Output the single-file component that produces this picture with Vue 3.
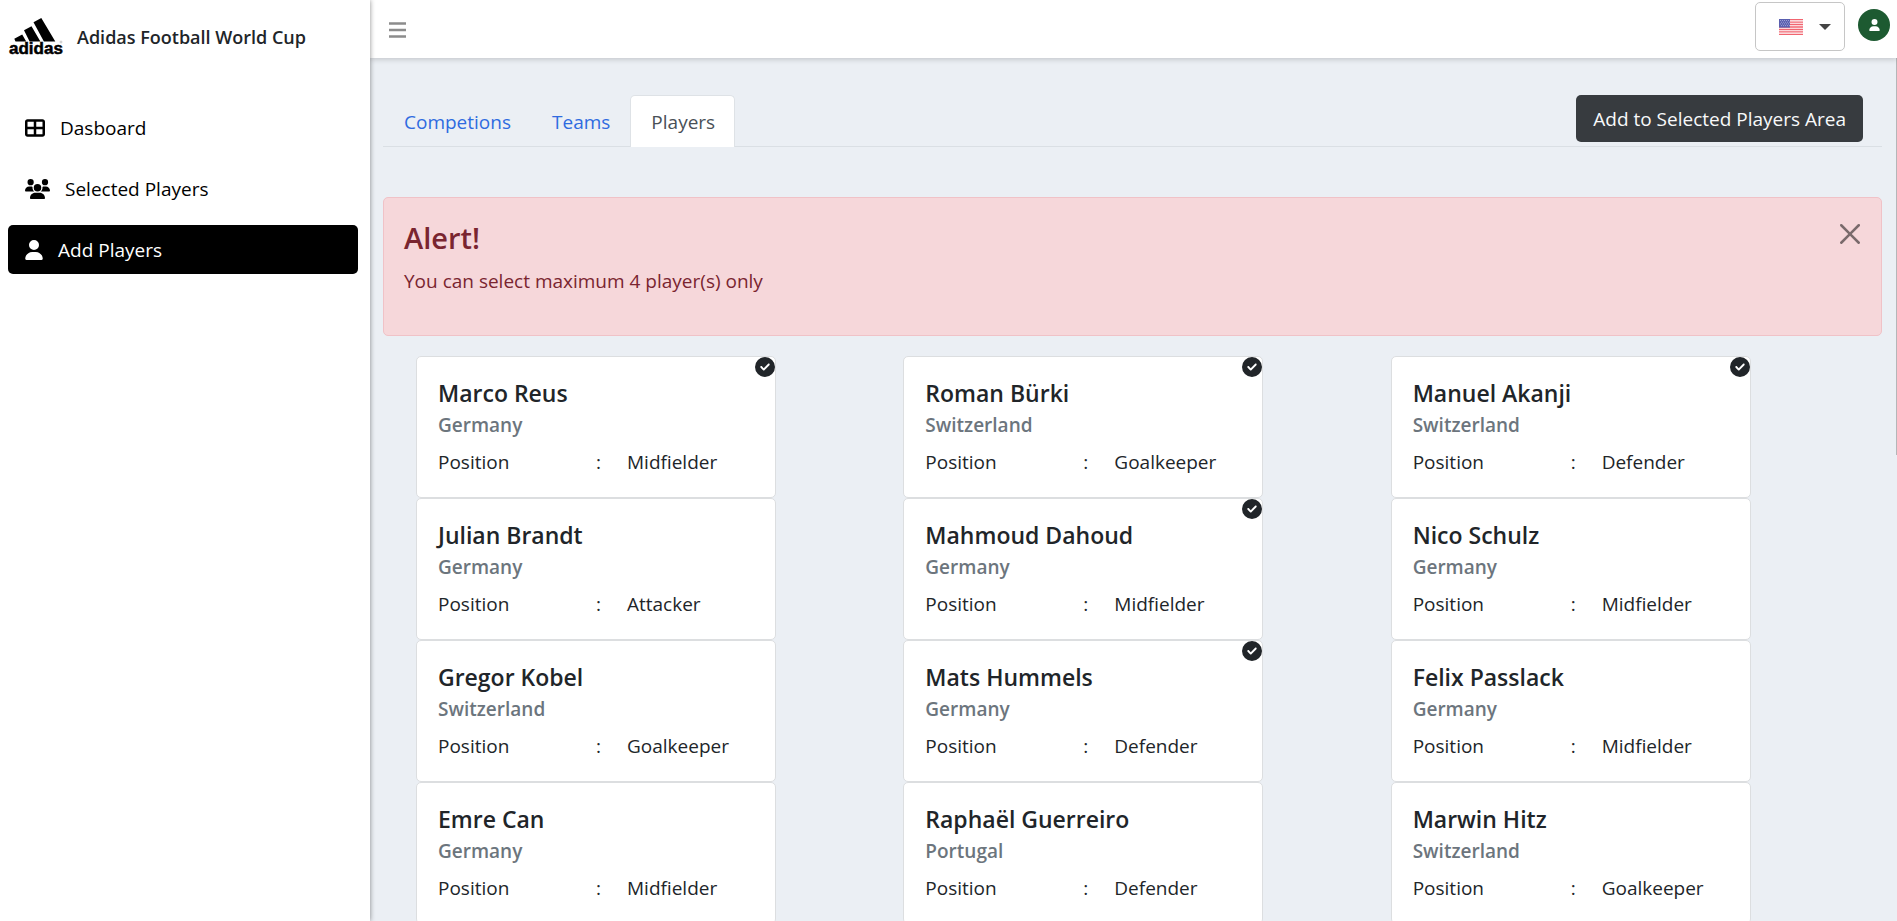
<script setup>
import { ref } from 'vue'

const navItems = [
  {
    label: 'Dasboard',
    box: '0 0 512 512',
    width: 20,
    path: 'M448 96V224H288V96H448zm0 192V416H288V288H448zM224 224H64V96H224V224zM64 288H224V416H64V288zM64 32C28.7 32 0 60.7 0 96V416c0 35.3 28.7 64 64 64H448c35.3 0 64-28.7 64-64V96c0-35.3-28.7-64-64-64H64z'
  },
  {
    label: 'Selected Players',
    box: '0 0 640 512',
    width: 25,
    path: 'M144 0a80 80 0 1 1 0 160A80 80 0 1 1 144 0zM512 0a80 80 0 1 1 0 160A80 80 0 1 1 512 0zM0 298.7C0 239.8 47.8 192 106.7 192l42.7 0c15.9 0 31 3.5 44.6 9.7c-1.3 7.2-1.9 14.7-1.9 22.3c0 38.2 16.8 72.5 43.3 96c-.2 0-.4 0-.7 0L21.3 320C9.6 320 0 310.4 0 298.7zM405.3 320c-.2 0-.4 0-.7 0c26.6-23.5 43.3-57.8 43.3-96c0-7.6-.7-15-1.9-22.3c13.6-6.3 28.7-9.7 44.6-9.7l42.7 0C592.2 192 640 239.8 640 298.7c0 11.8-9.6 21.3-21.3 21.3l-213.3 0zM224 224a96 96 0 1 1 192 0 96 96 0 1 1 -192 0zM128 485.3C128 411.7 187.7 352 261.3 352l117.3 0C452.3 352 512 411.7 512 485.3c0 14.7-11.9 26.7-26.7 26.7l-330.7 0c-14.7 0-26.7-11.9-26.7-26.7z'
  },
  {
    label: 'Add Players',
    box: '0 0 448 512',
    width: 18,
    active: true,
    path: 'M224 256A128 128 0 1 0 224 0a128 128 0 1 0 0 256zm-45.7 48C79.8 304 0 383.8 0 482.3C0 498.7 13.3 512 29.7 512H418.3c16.4 0 29.7-13.3 29.7-29.7C448 383.8 368.2 304 269.7 304H178.3z'
  }
]

const tabs = ['Competions', 'Teams', 'Players']
const activeTab = ref('Players')
const alertOpen = ref(true)

const players = [
  { name: 'Marco Reus', country: 'Germany', position: 'Midfielder', selected: true },
  { name: 'Roman Bürki', country: 'Switzerland', position: 'Goalkeeper', selected: true },
  { name: 'Manuel Akanji', country: 'Switzerland', position: 'Defender', selected: true },
  { name: 'Julian Brandt', country: 'Germany', position: 'Attacker' },
  { name: 'Mahmoud Dahoud', country: 'Germany', position: 'Midfielder', selected: true },
  { name: 'Nico Schulz', country: 'Germany', position: 'Midfielder' },
  { name: 'Gregor Kobel', country: 'Switzerland', position: 'Goalkeeper' },
  { name: 'Mats Hummels', country: 'Germany', position: 'Defender', selected: true },
  { name: 'Felix Passlack', country: 'Germany', position: 'Midfielder' },
  { name: 'Emre Can', country: 'Germany', position: 'Midfielder' },
  { name: 'Raphaël Guerreiro', country: 'Portugal', position: 'Defender' },
  { name: 'Marwin Hitz', country: 'Switzerland', position: 'Goalkeeper' }
]
</script>

<template>
  <div class="app">
    <aside class="sidebar">
      <div class="brand">
        <svg class="logo" viewBox="0 0 54 38" width="54" height="38" role="img" aria-label="adidas">
          <path d="M24.5 4.2 32.3 0l14 23.4H34.9zM15 12.3l7.5-4 8.9 15.1H20.600zM5.300 20.800 13.200 16.600l4 6.800H6.500z" />
          <text x="0" y="36" class="logo-word">adidas</text>
          <circle cx="52" cy="24" r="1" fill="none" stroke="#999" stroke-width="0.500" />
        </svg>
        <span class="brand-name">Adidas Football World Cup</span>
      </div>
      <nav class="nav">
        <a v-for="item in navItems" :key="item.label" href="#" class="nav-link" :class="{ active: item.active }">
          <svg :viewBox="item.box" :width="item.width" height="20" aria-hidden="true">
            <path :d="item.path" fill="currentColor" fill-rule="evenodd" />
          </svg>
          <span>{{ item.label }}</span>
        </a>
      </nav>
    </aside>

    <div class="main">
      <header class="topbar">
        <button class="menu" type="button" aria-label="Toggle menu">
          <svg viewBox="0 0 17 16" width="17" height="16"><path d="M0 1.500H17M0 8H17M0 14.500H17" stroke="#8c8c8c" stroke-width="2.300" /></svg>
        </button>
        <div class="account">
          <button class="language" type="button" aria-label="Language: English (US)" aria-haspopup="listbox">
            <svg class="flag" viewBox="0 0 24 16" width="24" height="16">
              <rect width="24" height="16" fill="#fff" />
              <path d="M0 .6H24M0 3.100H24M0 5.500H24M0 8H24M0 10.500H24M0 12.900H24M0 15.400H24" stroke="#ee3f4d" stroke-width="1.300" />
              <rect width="11" height="8.600" fill="#32389c" />
              <path d="M1 1.500H11M2 3.200H11M1 4.900H11M2 6.600H11" stroke="#c9cbee" stroke-width="0.700" stroke-dasharray="0.800 1.200" />
            </svg>
            <svg viewBox="0 0 12 6" width="12" height="6"><path d="M0 0H12L6 6z" fill="#444" /></svg>
          </button>
          <button class="avatar" type="button" aria-label="Account">
            <svg viewBox="0 0 448 512" width="11" height="12"><path :d="navItems[2].path" fill="#fff" /></svg>
          </button>
        </div>
      </header>

      <main class="content">
        <div class="tabbar">
          <div class="tabs" role="tablist">
            <button
              v-for="tab in tabs"
              :key="tab"
              type="button"
              role="tab"
              class="tab"
              :class="{ active: tab === activeTab }"
              :aria-selected="tab === activeTab"
              @click="activeTab = tab"
            >{{ tab }}</button>
          </div>
          <button class="add" type="button">Add to Selected Players Area</button>
        </div>

        <section v-if="alertOpen" class="alert" role="alert">
          <div>
            <h2>Alert!</h2>
            <p>You can select maximum 4 player(s) only</p>
          </div>
          <button class="close" type="button" aria-label="Close" @click="alertOpen = false">
            <svg viewBox="0 0 16 16" width="20" height="20"><path d="M.293.293a1 1 0 0 1 1.414 0L8 6.586 14.293.293a1 1 0 1 1 1.414 1.414L9.414 8l6.293 6.293a1 1 0 0 1-1.414 1.414L8 9.414l-6.293 6.293a1 1 0 0 1-1.414-1.414L6.586 8 .293 1.707a1 1 0 0 1 0-1.414z" /></svg>
          </button>
        </section>

        <div class="players">
          <article v-for="player in players" :key="player.name" class="card">
            <svg v-if="player.selected" class="check" viewBox="0 0 512 512" width="20" height="20" role="img" aria-label="Selected">
              <path fill="#212529" d="M256 512A256 256 0 1 0 256 0a256 256 0 1 0 0 512zM369 209L241 337c-9.400 9.400-24.600 9.400-33.900 0l-64-64c-9.400-9.400-9.400-24.600 0-33.900s24.600-9.400 33.900 0l47 47L335 175c9.400-9.400 24.600-9.400 33.900 0s9.400 24.600 0 33.900z" />
            </svg>
            <h3>{{ player.name }}</h3>
            <h4>{{ player.country }}</h4>
            <div class="detail">
              <span>Position</span>
              <span>:</span>
              <span>{{ player.position }}</span>
            </div>
          </article>
        </div>
      </main>
      <span class="scroll-thumb" aria-hidden="true"></span>
    </div>
  </div>
</template>

<style>
body {
  overflow: hidden;
}
</style>

<style scoped>
* {
  box-sizing: border-box;
}

.app {
  display: flex;
  height: 100vh;
  overflow: hidden;
  background: #ebeff4;
  color: #212529;
  font-family: "Segoe UI", "Open Sans", "Noto Sans", sans-serif;
  font-size: 19px;
  line-height: 30px;
}

button {
  margin: 0;
  padding: 0;
  border: 0;
  background: none;
  font: inherit;
  cursor: pointer;
}

svg {
  display: block;
  flex: none;
}

h2,
h3,
h4,
p {
  margin: 0;
}

.sidebar {
  position: relative;
  z-index: 2;
  flex: none;
  width: 370px;
  background: #fff;
  box-shadow: 0 0 5px rgba(0, 0, 0, 0.45);
}

.brand {
  display: flex;
  align-items: center;
  gap: 14px;
  height: 74px;
  padding-left: 9px;
}

.logo {
  overflow: visible;
}

.logo-word {
  font-family: "Liberation Sans", Arial, sans-serif;
  font-size: 17px;
  font-weight: 700;
  stroke: #000;
  stroke-width: 0.5px;
}

.brand-name {
  font-size: 18px;
  font-weight: 600;
}

.nav {
  display: flex;
  flex-direction: column;
  gap: 12px;
  padding: 29px 12px 0 8px;
}

.nav-link {
  display: flex;
  align-items: center;
  gap: 15px;
  height: 49px;
  padding: 0 17px;
  border-radius: 5px;
  color: #000;
  text-decoration: none;
}

.nav-link.active {
  background: #000;
  color: #fff;
}

.main {
  position: relative;
  display: flex;
  flex: 1;
  flex-direction: column;
  min-width: 0;
}

.topbar {
  position: relative;
  z-index: 1;
  display: flex;
  flex: none;
  justify-content: space-between;
  height: 58px;
  padding: 2px 7px 0 19px;
  background: #fff;
  box-shadow: 0 1px 6px rgba(0, 0, 0, 0.2);
}

.menu {
  height: 56px;
}

.account {
  display: flex;
  gap: 13px;
}

.language {
  display: flex;
  align-items: center;
  justify-content: space-between;
  width: 90px;
  height: 49px;
  padding: 0 13px 0 23px;
  border: 1px solid #c6c6c6;
  border-radius: 5px;
}

.flag {
  opacity: 0.8;
}

.avatar {
  display: flex;
  align-items: center;
  justify-content: center;
  width: 32px;
  height: 32px;
  margin-top: 7px;
  border-radius: 50%;
  background: #1d5a31;
}

.content {
  flex: 1;
  min-height: 0;
  padding: 37px 15px 0 13px;
}

.tabbar {
  display: flex;
  align-items: flex-start;
  justify-content: space-between;
  padding-right: 19px;
  border-bottom: 1px solid #dadfe4;
}

.tabs {
  display: flex;
  margin-bottom: -1px;
}

.tab {
  height: 52px;
  padding: 0 19px 0 20px;
  border: 1px solid transparent;
  border-bottom: 0;
  border-radius: 5px 5px 0 0;
  color: #2f6be0;
}

.tab.active {
  border-color: #dee2e6;
  background: #fff;
  color: #495057;
}

.add {
  height: 47px;
  padding: 1px 17px 0;
  border-radius: 5px;
  background: #373b3f;
  color: #f8f9fa;
}

.alert {
  display: flex;
  align-items: flex-start;
  justify-content: space-between;
  height: 139px;
  margin-top: 50px;
  padding: 22px 21px 20px 20px;
  border: 1px solid #f0c2c7;
  border-radius: 5px;
  background: #f6d7da;
  color: #7a2530;
}

.alert h2 {
  margin-bottom: 10px;
  font-size: 29px;
  font-weight: 600;
  line-height: 36px;
}

.close {
  margin-top: 4px;
  opacity: 0.5;
}

.players {
  display: grid;
  grid-template-columns: repeat(3, 1fr);
  grid-auto-rows: 142px;
  padding: 20px 18px 0 19px;
}

.card {
  position: relative;
  width: 360px;
  margin-left: 14px;
  padding: 20px 20px 20px 21px;
  border: 1px solid #dcdee0;
  border-radius: 5px;
  background: #fff;
}

.check {
  position: absolute;
  top: 0;
  right: 0;
}

h3 {
  font-size: 23px;
  font-weight: 600;
  line-height: 32px;
}

h4 {
  color: #6c757d;
  font-size: 19px;
  font-weight: 600;
  line-height: 32px;
}

.detail {
  display: grid;
  grid-template-columns: 158px 31px 1fr;
  line-height: 42px;
}

.scroll-thumb {
  position: absolute;
  top: 58px;
  right: 0;
  width: 1px;
  height: 397px;
  background: #b4b6b8;
}
</style>
